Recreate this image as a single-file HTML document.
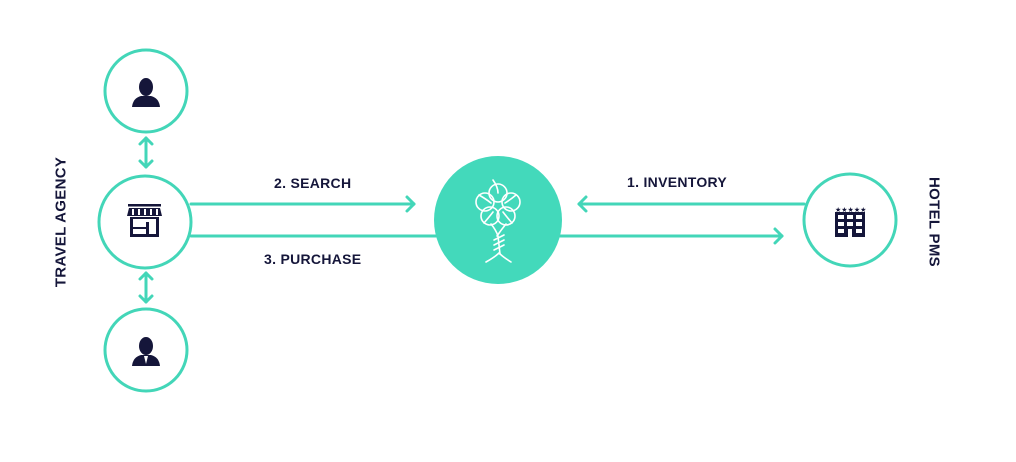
<!DOCTYPE html>
<html><head><meta charset="utf-8"><style>
html,body{margin:0;padding:0;background:#fff;}
body{width:1016px;height:462px;position:relative;overflow:hidden;font-family:"Liberation Sans",sans-serif;}
.t{position:absolute;font-weight:bold;font-size:14px;color:#15163a;white-space:nowrap;letter-spacing:0.3px;}
</style></head><body>
<svg width="1016" height="462" style="position:absolute;left:0;top:0">
<g fill="none" stroke="#43d6b8" stroke-width="3" stroke-linecap="round" stroke-linejoin="round">
<circle cx="146" cy="91" r="41"/>
<circle cx="145" cy="222" r="46"/>
<circle cx="146" cy="350" r="41"/>
<circle cx="850" cy="220" r="46"/>
<line x1="146" y1="138" x2="146" y2="167"/>
<polyline points="140,144 146,138 152,144"/>
<polyline points="140,161 146,167 152,161"/>
<line x1="146" y1="273" x2="146" y2="302"/>
<polyline points="140,279 146,273 152,279"/>
<polyline points="140,296 146,302 152,296"/>
<line x1="191" y1="204" x2="414" y2="204"/>
<polyline points="407,197 414,204 407,211"/>
<line x1="191" y1="236" x2="436" y2="236"/>
<line x1="579" y1="204" x2="804" y2="204"/>
<polyline points="586,197 579,204 586,211"/>
<line x1="560" y1="236" x2="782" y2="236"/>
<polyline points="775,229 782,236 775,243"/>
</g>
<circle cx="498" cy="220" r="64" fill="#43d9bb"/>
<g fill="none" stroke="#fff" stroke-width="1.6" stroke-linecap="round">
<circle cx="498" cy="193" r="9"/>
<circle cx="511" cy="202" r="9"/>
<circle cx="506" cy="216" r="9"/>
<circle cx="490" cy="216" r="9"/>
<circle cx="485" cy="202" r="9"/>
<path d="M493 180 Q498 187 498 193 M516 195 Q510 200 505 203 M512 223 Q506 216 503 212 M484 223 Q490 216 493 212 M479 195 Q486 199 491 203"/>
<path d="M491 224 Q496 230 498 236 L500 254"/>
<path d="M506 224 Q501 230 497 236"/>
<path d="M494 240 L504 235 M494 245 L504 240 M494 250 L504 245"/>
<path d="M486 262 Q495 257 499 253 Q503 257 511 262"/>
</g>
<g fill="#15163a">
<ellipse cx="146" cy="87" rx="7" ry="9"/>
<path d="M132 107 Q133 98 141 96 L151 96 Q159 98 160 107 Z"/>
<ellipse cx="146" cy="346" rx="7" ry="9"/>
<path d="M132 366 Q133 357 141 355 L151 355 Q159 357 160 366 Z"/>
</g>
<path d="M144 356 L146 364 L148 356 Z" fill="#fff"/>
<g fill="#15163a">
<rect x="128" y="204" width="33" height="2.5"/>
<path d="M129 208 L160 208 L162 216 L127 216 Z"/>
<rect x="130" y="217" width="3" height="20"/>
<rect x="156" y="217" width="3" height="20"/>
<rect x="130" y="234" width="29" height="3"/>
<rect x="130" y="217" width="29" height="2"/>
<rect x="146" y="222" width="3" height="13"/>
<rect x="133" y="227" width="13" height="2"/>
</g>
<g fill="#fff"><rect x="132" y="209" width="2" height="6"/><rect x="138" y="209" width="2" height="6"/><rect x="144" y="209" width="2" height="6"/><rect x="150" y="209" width="2" height="6"/><rect x="156" y="209" width="2" height="6"/></g>
<g fill="#15163a">
<text x="835" y="212" font-size="7" font-family="DejaVu Sans">★★★★★</text>
<rect x="835" y="212" width="30" height="25"/>
</g>
<g fill="#fff">
<rect x="838" y="215" width="6" height="4"/><rect x="847" y="215" width="6" height="4"/><rect x="856" y="215" width="6" height="4"/>
<rect x="838" y="222" width="6" height="4"/><rect x="847" y="222" width="6" height="4"/><rect x="856" y="222" width="6" height="4"/>
<rect x="838" y="229" width="6" height="4"/><rect x="848" y="229" width="4" height="8"/><rect x="856" y="229" width="6" height="4"/>
</g>
</svg>
<div class="t" style="left:274px;top:175px;">2. SEARCH</div>
<div class="t" style="left:264px;top:251px;">3. PURCHASE</div>
<div class="t" style="left:627px;top:174px;">1. INVENTORY</div>
<div class="t" style="left:61px;top:222px;font-size:15px;transform:translate(-50%,-50%) rotate(-90deg);">TRAVEL AGENCY</div>
<div class="t" style="left:934px;top:222px;font-size:15px;transform:translate(-50%,-50%) rotate(90deg);">HOTEL PMS</div>
</body></html>
